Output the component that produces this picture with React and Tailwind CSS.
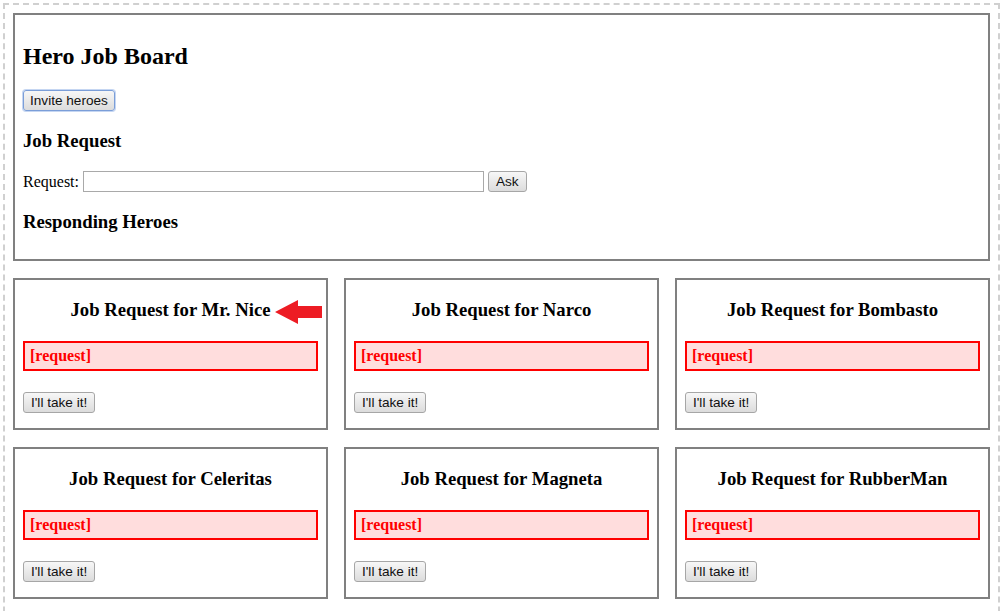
import React from "react";

const heroes = ["Mr. Nice", "Narco", "Bombasto", "Celeritas", "Magneta", "RubberMan"];

function Btn({ children, focused }) {
  return (
    <button
      className={
        focused
          ? "h-[21px] px-[6px] rounded-[3px] border border-[#7b9ed8] bg-gradient-to-b from-[#f7f7f7] to-[#dcdcdc] text-[13.6px] text-[#111] leading-none [font-family:'Liberation_Sans',Arial,sans-serif] shadow-[0_0_0_1px_#c5d6f2]"
          : "h-[21px] px-[7px] rounded-[3px] border border-[#a6a6a6] bg-gradient-to-b from-[#f7f7f7] to-[#dcdcdc] text-[13.6px] text-[#111] leading-none [font-family:'Liberation_Sans',Arial,sans-serif]"
      }
    >
      {children}
    </button>
  );
}

function Arrow() {
  return (
    <svg className="absolute left-[259px] top-[19px]" width="49" height="26" viewBox="0 0 49 26">
      <polygon points="1,13 24,1 24,7 48,7 48,19 24,19 24,25" fill="#ed1c24" />
    </svg>
  );
}

function Card({ name, arrow }) {
  return (
    <div className="relative border-2 border-[#808080] px-2 h-[152px]">
      <h3 className="text-center text-[18.72px] font-bold mt-[19.72px] mb-[20px]">
        Job Request for {name}
      </h3>
      {arrow && <Arrow />}
      <div className="border-2 border-[#ff0000] bg-[#ffdddd] px-[5px] h-[30px] flex items-center text-[16px] font-bold text-[#ff0000]">
        [request]
      </div>
      <div className="mt-[21px]">
        <Btn>I'll take it!</Btn>
      </div>
    </div>
  );
}

export default function App() {
  return (
    <div className="[font-family:'Liberation_Serif','Times_New_Roman',serif] leading-[normal] text-black bg-white w-[1003px] h-[611px] overflow-hidden pt-[3px] px-[3px]">
      <div className="border-2 border-dashed border-[#d0d0d0] p-2 h-[700px]">
        <div className="border-2 border-[#808080] px-2 pt-2 pb-[7px]">
          <h2 className="text-[24px] font-bold mt-[19.92px] mb-[19.92px]">Hero Job Board</h2>
          <Btn focused>Invite heroes</Btn>
          <h3 className="text-[18.72px] font-bold mt-[18.72px] mb-[19.72px]">Job Request</h3>
          <div className="flex items-center h-[21px] text-[16px]">
            <span>Request:</span>
            <input className="ml-[4px] w-[401px] h-[21px] border border-[#a9a9a9] bg-white outline-none" />
            <span className="ml-[4px]">
              <Btn>Ask</Btn>
            </span>
          </div>
          <h3 className="text-[18.72px] font-bold my-[18.72px]">Responding Heroes</h3>
        </div>
        <div className="grid grid-cols-3 gap-x-4 gap-y-[17px] mt-[17px]">
          {heroes.map((h, i) => (
            <Card key={h} name={h} arrow={i === 0} />
          ))}
        </div>
      </div>
    </div>
  );
}
